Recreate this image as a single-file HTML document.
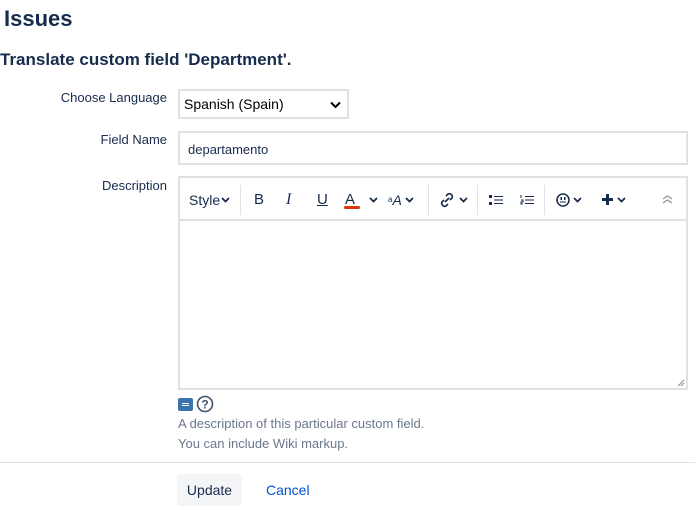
<!DOCTYPE html>
<html><head><meta charset="utf-8"><style>
*{box-sizing:border-box;margin:0;padding:0}
body{width:695px;height:511px;background:#fff;font-family:"Liberation Sans",Arial,sans-serif;color:#172b4d;position:relative;overflow:hidden}
.a{position:absolute}
.lbl{position:absolute;right:528px;font-size:13px;color:#172b4d;white-space:nowrap}
.tb{position:absolute;top:0;height:43px;display:flex;align-items:center;font-size:15px;color:#172b4d}
.sep{position:absolute;top:7px;width:1px;height:30px;background:#dfe1e6}
.cv{margin-left:3px}
</style></head><body>
<div class="a" style="left:4px;top:6px;font-size:22px;font-weight:bold;color:#172b4d">Issues</div>
<div class="a" style="left:0;top:50px;font-size:17px;font-weight:bold;color:#172b4d">Translate custom field 'Department'.</div>

<div class="lbl" style="top:90px">Choose Language</div>
<div class="a" style="left:178px;top:89px;width:171px;height:30px;border:2px solid #dfe1e6;background:#fff;font-size:14px;padding:5px 0 0 4px;color:#000">Spanish (Spain)
<svg class="a" style="right:6px;top:10px" width="11" height="8" viewBox="0 0 11 8"><path d="M1 1.5L5.5 6L10 1.5" stroke="#000" stroke-width="2" fill="none"/></svg></div>

<div class="lbl" style="top:132px">Field Name</div>
<div class="a" style="left:178px;top:131px;width:510px;height:34px;border:2px solid #dfe1e6;font-size:13px;padding:9px 0 0 8px;color:#172b4d">departamento</div>

<div class="lbl" style="top:178px">Description</div>
<div class="a" style="left:178px;top:176px;width:510px;height:214px;border:2px solid #dfe1e6;background:#fff">
 <div class="a" style="left:0;top:0;width:506px;height:43px;background:#fff;border-bottom:2px solid #dfe1e6">
  <div class="tb" style="left:9px;font-size:14px">Style<svg class="cv" style="margin-left:1px" width="9" height="6"><path d="M1 1l3.5 3.5L8 1" stroke="#172b4d" stroke-width="1.8" fill="none"/></svg></div>
  <div class="sep" style="left:60px"></div>
  <div class="tb" style="left:74px">B</div>
  <div class="tb" style="left:106px;font-style:italic;font-family:'Liberation Serif',serif;font-size:16px">I</div>
  <div class="tb" style="left:137px;text-decoration:underline">U</div>
  <div class="tb" style="left:165px">A</div>
  <div class="a" style="left:164px;top:28px;width:16px;height:3px;background:#de350b;border-radius:2px"></div>
  <div class="tb" style="left:189px"><svg width="9" height="6"><path d="M1 1l3.5 3.5L8 1" stroke="#172b4d" stroke-width="1.8" fill="none"/></svg></div>
  <div class="tb" style="left:208px;font-style:italic;font-size:14px"><sup style="font-size:8px;font-style:normal">a</sup>A<svg class="cv" width="9" height="6"><path d="M1 1l3.5 3.5L8 1" stroke="#172b4d" stroke-width="1.8" fill="none"/></svg></div>
  <div class="sep" style="left:248px"></div>
  <div class="tb" style="left:258px">
   <svg width="18" height="18" viewBox="0 0 18 18"><path d="M7 11l4-4M8 5l2-2a3 3 0 014 4l-2 2M10 13l-2 2a3 3 0 01-4-4l2-2" stroke="#172b4d" stroke-width="1.6" fill="none"/></svg><svg class="cv" width="9" height="6"><path d="M1 1l3.5 3.5L8 1" stroke="#172b4d" stroke-width="1.8" fill="none"/></svg></div>
  <div class="sep" style="left:297px"></div>
  <div class="tb" style="left:309px"><svg width="14" height="12"><rect x="0" y="1" width="3" height="3" fill="#172b4d"/><rect x="0" y="8" width="3" height="3" fill="#172b4d"/><path d="M5 2.5h9M5 6h9M5 9.5h9" stroke="#172b4d"/></svg></div>
  <div class="tb" style="left:340px"><svg width="14" height="12"><path d="M1 1v3M1 6h2v2h-2v2h2M5 2.5h9M5 6h9M5 9.5h9" stroke="#172b4d" fill="none"/></svg></div>
  <div class="sep" style="left:364px"></div>
  <div class="tb" style="left:376px"><svg width="14" height="14"><circle cx="7" cy="7" r="6" stroke="#172b4d" stroke-width="1.5" fill="none"/><rect x="4.5" y="4" width="1.5" height="3" fill="#172b4d"/><rect x="8" y="4" width="1.5" height="3" fill="#172b4d"/><path d="M4 9h6" stroke="#172b4d"/></svg><svg class="cv" width="9" height="6"><path d="M1 1l3.5 3.5L8 1" stroke="#172b4d" stroke-width="1.8" fill="none"/></svg></div>
  <div class="tb" style="left:421px"><svg width="13" height="13"><path d="M6.5 1v11M1 6.5h11" stroke="#172b4d" stroke-width="3"/></svg><svg class="cv" width="9" height="6"><path d="M1 1l3.5 3.5L8 1" stroke="#172b4d" stroke-width="1.8" fill="none"/></svg></div>
  <div class="tb" style="left:482px"><svg width="11" height="9"><path d="M1 4l4.5-3L10 4M1 8l4.5-3L10 8" stroke="#8993a4" stroke-width="1.2" fill="none"/></svg></div>
 </div>
 <svg class="a" style="right:1px;bottom:1px" width="8" height="8"><path d="M7 1L1 7M7 4L4 7" stroke="#888"/></svg>
</div>

<div class="a" style="left:178px;top:398px;width:15px;height:13px;background:#3b73af;border-radius:2px"><div class="a" style="left:4px;top:5px;width:7px;height:1px;background:#fff"></div><div class="a" style="left:4px;top:7px;width:7px;height:1px;background:#fff"></div></div>
<svg class="a" style="left:196px;top:395px" width="18" height="18"><circle cx="9" cy="9" r="7.5" stroke="#42526e" stroke-width="1.6" fill="none"/><text x="9" y="13.5" text-anchor="middle" font-size="12" font-weight="bold" fill="#42526e" font-family="Liberation Sans">?</text></svg>
<div class="a" style="left:178px;top:416px;font-size:13px;color:#6b778c">A description of this particular custom field.</div>
<div class="a" style="left:178px;top:436px;font-size:13px;color:#6b778c">You can include Wiki markup.</div>
<div class="a" style="left:0;top:462px;width:695px;height:1px;background:#dfe1e6"></div>
<div class="a" style="left:177px;top:474px;width:65px;height:32px;background:#f4f5f7;border-radius:3px;font-size:14px;color:#172b4d;text-align:center;line-height:32px">Update</div>
<div class="a" style="left:266px;top:474px;font-size:14px;color:#0052cc;line-height:32px">Cancel</div>
</body></html>
